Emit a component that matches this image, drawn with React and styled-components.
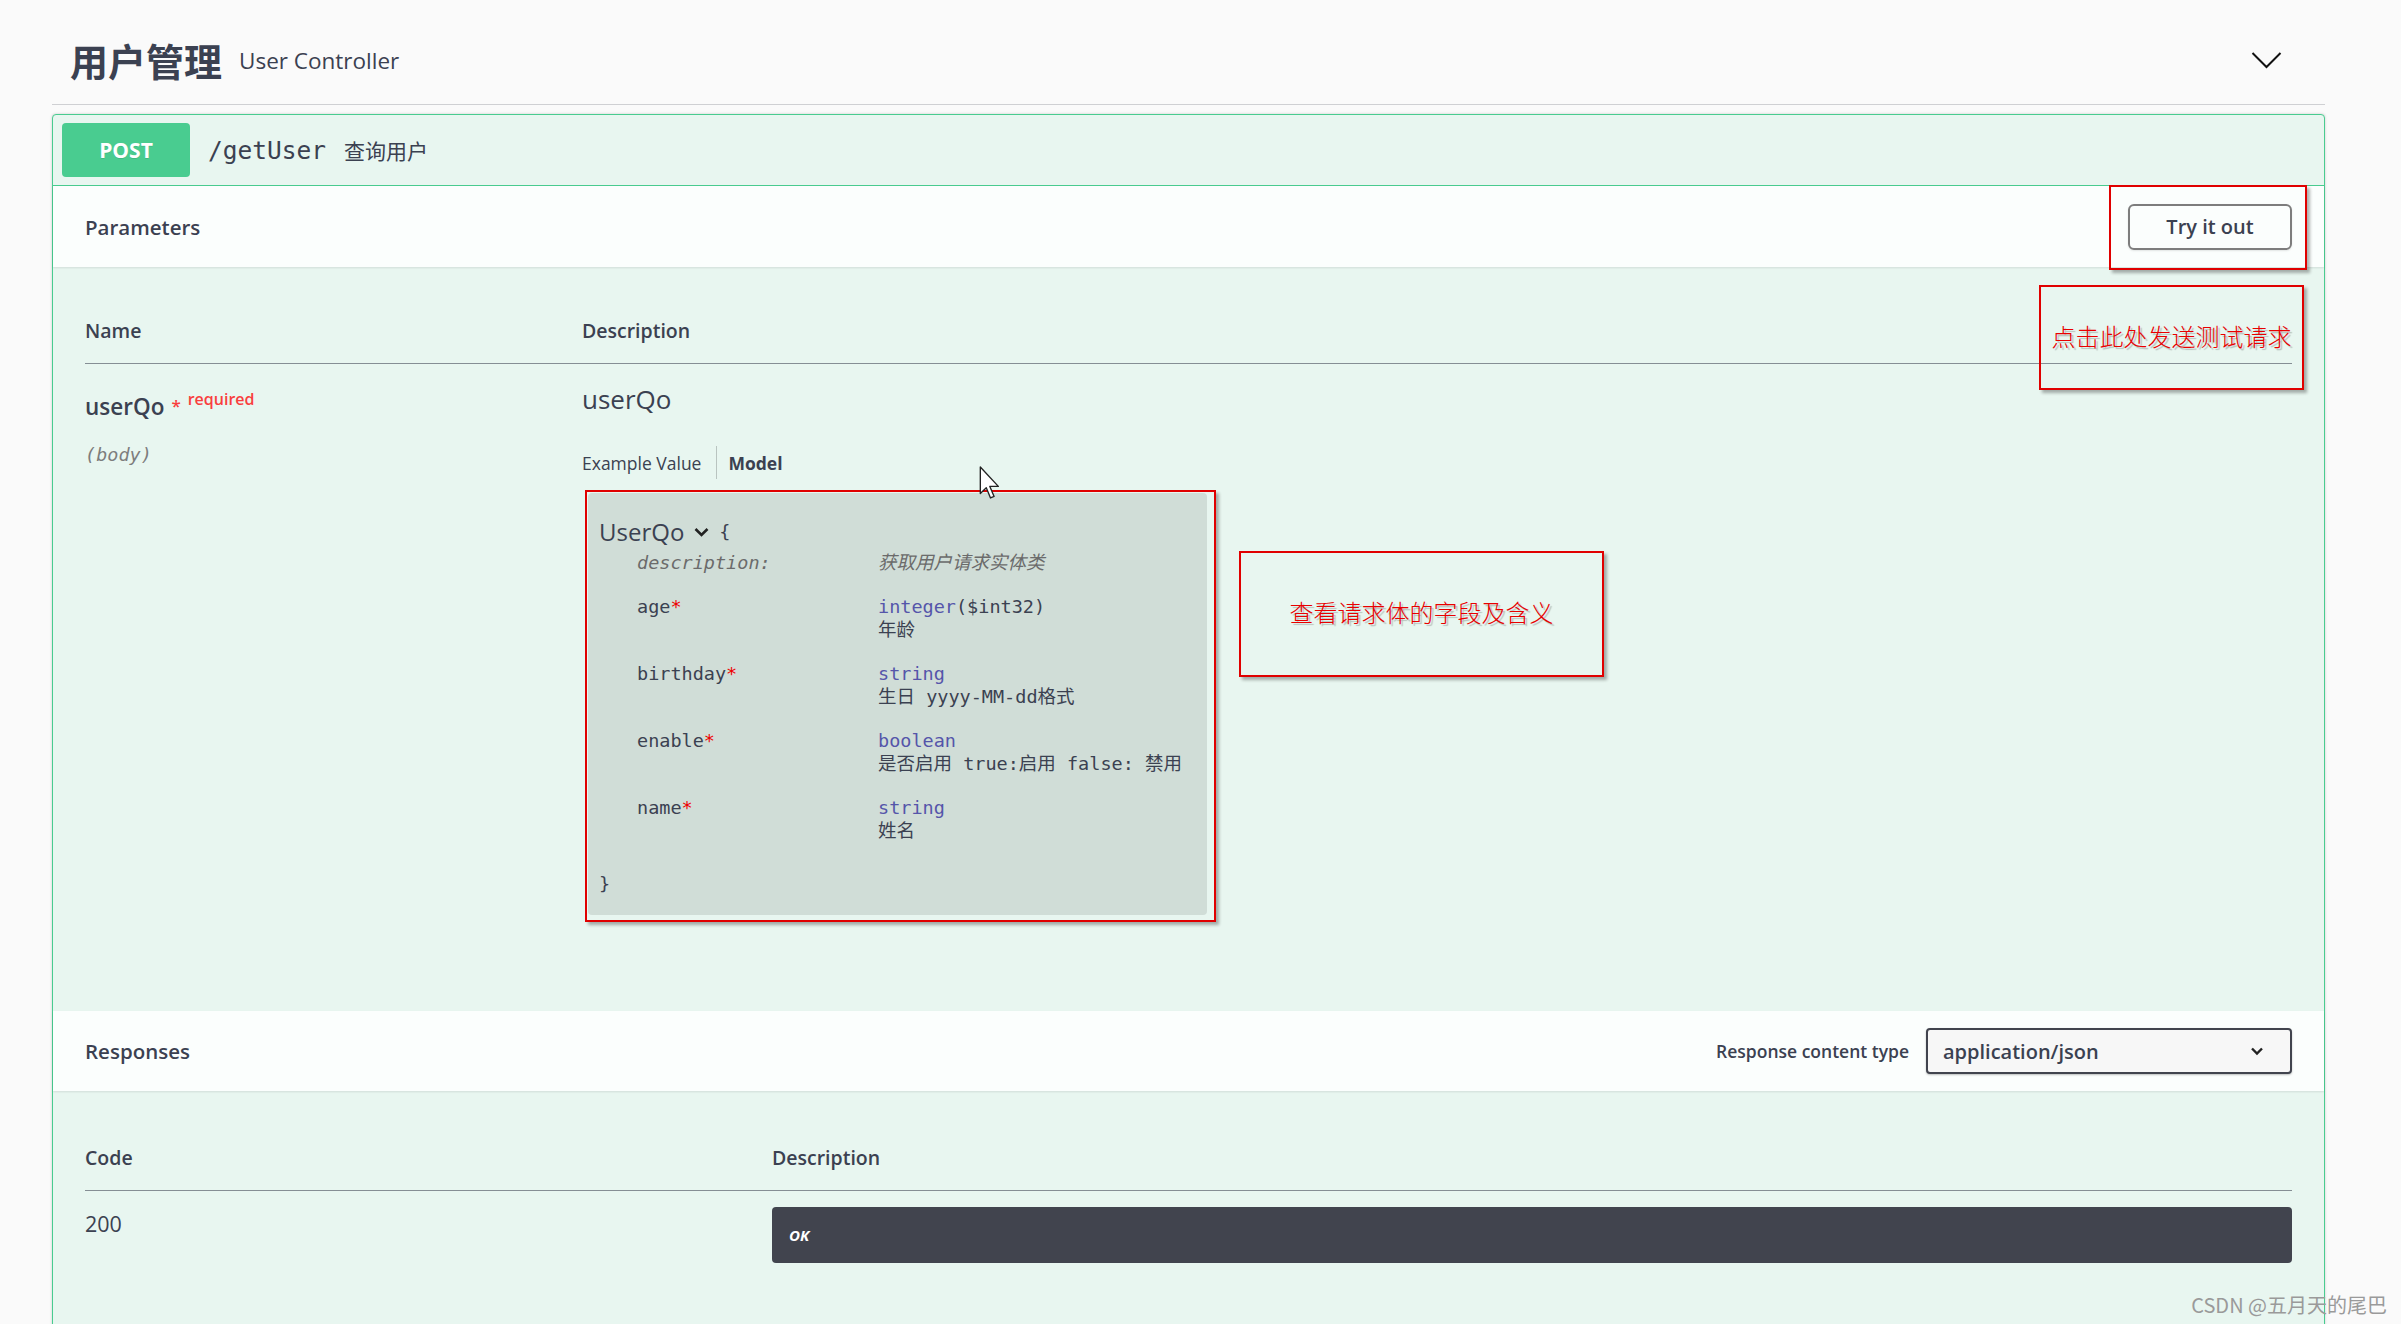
import React from 'react';
import styled, { createGlobalStyle } from 'styled-components';

const GlobalStyle = createGlobalStyle`
  html, body {
    margin: 0;
    padding: 0;
    background: #fafafa;
  }
  body {
    font-family: "Open Sans", "Noto Sans CJK SC", sans-serif;
    color: #3b4151;
  }
  * {
    box-sizing: border-box;
  }
`;

const MONO = '"DejaVu Sans Mono", "Noto Sans CJK SC", monospace';
const CJK = '"Noto Sans CJK SC", sans-serif';

const properties = [
  { key: 'age', type: 'integer', format: '($int32)', desc: '年龄' },
  { key: 'birthday', type: 'string', desc: '生日 yyyy-MM-dd格式' },
  { key: 'enable', type: 'boolean', desc: '是否启用 true:启用 false: 禁用' },
  { key: 'name', type: 'string', desc: '姓名' },
];

function App() {
  return (
    <Page>
      <GlobalStyle />
      <TagHeader>
        <TagTitle>用户管理</TagTitle>
        <TagSub>User Controller</TagSub>
        <Spacer />
        <svg width="31" height="18" viewBox="0 0 31 18">
          <polyline points="1.5,2 15.5,16 29.5,2" fill="none" stroke="#111" strokeWidth="2" />
        </svg>
      </TagHeader>

      <Opblock>
        <Summary>
          <Method>POST</Method>
          <Path>/getUser</Path>
          <PathDesc>查询用户</PathDesc>
        </Summary>

        <SectionHeader>
          <SectionTitle>Parameters</SectionTitle>
          <TryButton>Try it out</TryButton>
          <Mark $top={-1} $right={17} $width={198} $height={85} />
        </SectionHeader>

        <SectionBody $pt={51} $pb={89}>
          <Mark $top={18} $right={20} $width={265} $height={105}>
            <NoteText>点击此处发送测试请求</NoteText>
          </Mark>
          <Table>
            <thead>
              <tr>
                <Th $width={497}>Name</Th>
                <Th>Description</Th>
              </tr>
            </thead>
            <tbody>
              <tr>
                <Td>
                  <ParamName>
                    userQo
                    <Star>*</Star>
                    <Required>required</Required>
                  </ParamName>
                  <ParamIn>(body)</ParamIn>
                </Td>
                <Td>
                  <DescName>userQo</DescName>
                  <Tabs>
                    <Tab>Example Value</Tab>
                    <Tab $active>Model</Tab>
                  </Tabs>
                  <ModelRow>
                    <ModelFrame>
                      <ModelBox>
                        <ModelTitle>
                          UserQo
                          <svg width="17" height="12" viewBox="0 0 17 12">
                            <polyline points="2.5,3 8.5,9 14.5,3" fill="none" stroke="#222" strokeWidth="2.6" />
                          </svg>
                          <Brace>{'{'}</Brace>
                        </ModelTitle>
                        <Props>
                          <PropKey $muted>description:</PropKey>
                          <PropValue $muted>获取用户请求实体类</PropValue>
                          {properties.map((p) => (
                            <React.Fragment key={p.key}>
                              <PropKey>
                                {p.key}
                                <PropStar>*</PropStar>
                              </PropKey>
                              <PropValue>
                                <PropType>{p.type}</PropType>
                                {p.format}
                                <br />
                                {p.desc}
                              </PropValue>
                            </React.Fragment>
                          ))}
                        </Props>
                        <ClosingBrace>{'}'}</ClosingBrace>
                      </ModelBox>
                    </ModelFrame>
                    <NoteBox>
                      <NoteText>查看请求体的字段及含义</NoteText>
                    </NoteBox>
                  </ModelRow>
                </Td>
              </tr>
            </tbody>
          </Table>
        </SectionBody>

        <SectionHeader $height={80}>
          <SectionTitle>Responses</SectionTitle>
          <ContentType>
            <ContentLabel>Response content type</ContentLabel>
            <Select>
              application/json
              <svg width="14" height="10" viewBox="0 0 14 10">
                <polyline points="2,2.5 7,7.5 12,2.5" fill="none" stroke="#222" strokeWidth="2.4" />
              </svg>
            </Select>
          </ContentType>
        </SectionHeader>

        <SectionBody $pt={54} $pb={80}>
          <Table>
            <thead>
              <tr>
                <Th $width={687}>Code</Th>
                <Th>Description</Th>
              </tr>
            </thead>
            <tbody>
              <tr>
                <Td $pt={16}>
                  <Code>200</Code>
                </Td>
                <Td $pt={16}>
                  <OkBox>OK</OkBox>
                </Td>
              </tr>
            </tbody>
          </Table>
        </SectionBody>
      </Opblock>

      <Cursor width="21" height="34" viewBox="0 0 12 20">
        <path
          d="M0.6 0.6 L0.6 16.2 L4.1 12.8 L6.6 18.8 L8.7 17.9 L6.2 12 L11.2 12 Z"
          fill="#fff"
          stroke="#222"
          strokeWidth="0.8"
          strokeLinejoin="round"
        />
      </Cursor>
      <Watermark>CSDN @五月天的尾巴</Watermark>
    </Page>
  );
}

const Page = styled.div`
  position: relative;
  height: 1324px;
  overflow: hidden;
  padding: 0 76px 0 52px;
  background: #fafafa;
`;

const TagHeader = styled.div`
  display: flex;
  align-items: center;
  height: 105px;
  padding: 16px 43px 0 18px;
  border-bottom: 1px solid #cfd0d3;
`;

const TagTitle = styled.span`
  font-family: ${CJK};
  font-size: 38px;
  font-weight: 700;
  line-height: 1;
`;

const TagSub = styled.span`
  margin-left: 17px;
  font-size: 22.5px;
`;

const Spacer = styled.div`
  flex: 1;
`;

const Opblock = styled.div`
  margin-top: 9px;
  border: 1px solid #49cc90;
  border-radius: 4px;
  background: #e8f6f0;
  box-shadow: 0 0 3px rgba(0, 0, 0, 0.19);
`;

const Summary = styled.div`
  display: flex;
  align-items: center;
  padding: 8px 9px;
  border-bottom: 1px solid #49cc90;
`;

const Method = styled.div`
  display: flex;
  align-items: center;
  justify-content: center;
  width: 128px;
  height: 54px;
  border-radius: 4px;
  background: #49cc90;
  color: #fff;
  font-size: 21px;
  font-weight: 700;
  text-shadow: 0 1px 0 rgba(0, 0, 0, 0.1);
`;

const Path = styled.span`
  margin-left: 18px;
  font-family: ${MONO};
  font-size: 24.5px;
`;

const PathDesc = styled.span`
  margin-left: 18px;
  font-family: ${CJK};
  font-size: 21px;
`;

const SectionHeader = styled.div`
  position: relative;
  display: flex;
  align-items: center;
  justify-content: space-between;
  height: ${(p) => p.$height || 81}px;
  padding: 0 32px;
  background: rgba(255, 255, 255, 0.82);
  box-shadow: 0 1px 2px rgba(0, 0, 0, 0.1);
`;

const SectionTitle = styled.h4`
  margin: 0;
  font-size: 20.5px;
  font-weight: 600;
`;

const TryButton = styled.button`
  width: 164px;
  height: 46px;
  border: 2px solid #7d7d7d;
  border-radius: 6px;
  background: transparent;
  color: #3b4151;
  font-family: "Open Sans", sans-serif;
  font-size: 20px;
  font-weight: 600;
  box-shadow: 0 1px 2px rgba(0, 0, 0, 0.1);
`;

const Mark = styled.div`
  position: absolute;
  top: ${(p) => p.$top}px;
  right: ${(p) => p.$right}px;
  width: ${(p) => p.$width}px;
  height: ${(p) => p.$height}px;
  display: flex;
  align-items: center;
  justify-content: center;
  border: 2px solid #e00000;
  box-shadow: 3px 3px 3px rgba(0, 0, 0, 0.3);
  z-index: 2;
`;

const NoteText = styled.span`
  margin-bottom: 5px;
  font-family: ${CJK};
  font-size: 24px;
  font-weight: 300;
  color: #e80000;
  text-shadow: 2px 2px 1px rgba(0, 0, 0, 0.22);
  white-space: nowrap;
`;

const SectionBody = styled.div`
  position: relative;
  padding: ${(p) => p.$pt}px 32px ${(p) => p.$pb}px;
`;

const Table = styled.table`
  width: 100%;
  border-collapse: collapse;
`;

const Th = styled.th`
  width: ${(p) => (p.$width ? `${p.$width}px` : 'auto')};
  padding: 0 0 19px;
  border-bottom: 1px solid rgba(59, 65, 81, 0.35);
  text-align: left;
  font-size: 19.5px;
  font-weight: 600;
  line-height: 26px;
`;

const Td = styled.td`
  padding: ${(p) => p.$pt || 18}px 0 0;
  vertical-align: top;
`;

const ParamName = styled.div`
  font-size: 22.5px;
  font-weight: 600;
  line-height: 34px;
`;

const Star = styled.span`
  margin-left: 7px;
  color: #f93e3e;
  font-size: 17px;
  vertical-align: 3px;
`;

const Required = styled.span`
  margin-left: 7px;
  color: #f93e3e;
  font-size: 16px;
  vertical-align: 10px;
`;

const ParamIn = styled.div`
  margin-top: 18px;
  font-family: ${MONO};
  font-size: 18.5px;
  font-style: italic;
  line-height: 26px;
  color: #7d7d7d;
`;

const DescName = styled.div`
  font-size: 26px;
  line-height: 34px;
`;

const Tabs = styled.div`
  display: flex;
  align-items: center;
  height: 33px;
  margin-top: 30px;
`;

const Tab = styled.div`
  display: flex;
  align-items: center;
  height: 100%;
  padding: ${(p) => (p.$active ? '0 0 0 11px' : '0 15px 0 0')};
  border-left: ${(p) => (p.$active ? '1px solid rgba(0, 0, 0, 0.2)' : 'none')};
  font-size: 17.5px;
  font-weight: ${(p) => (p.$active ? 700 : 400)};
`;

const ModelRow = styled.div`
  display: flex;
  align-items: flex-start;
  gap: 23px;
  margin: 11px 0 0 3px;
`;

const ModelFrame = styled.div`
  width: 631px;
  padding: 1px 7px 5px 1px;
  border: 2px solid #e00000;
  box-shadow: 3px 3px 3px rgba(0, 0, 0, 0.3);
`;

const ModelBox = styled.div`
  padding: 23px 12px 20px 11px;
  border-radius: 4px;
  background: rgba(0, 0, 0, 0.1);
  font-family: ${MONO};
  font-size: 18.5px;
  line-height: 23px;
`;

const ModelTitle = styled.div`
  display: flex;
  align-items: center;
  gap: 9px;
  font-family: "Open Sans", sans-serif;
  font-size: 24px;
  line-height: 32px;
`;

const Brace = styled.span`
  font-family: ${MONO};
  font-size: 18.5px;
`;

const Props = styled.div`
  display: grid;
  grid-template-columns: 241px auto;
  row-gap: 21px;
  margin: 3px 0 0 38px;
`;

const PropKey = styled.div`
  color: ${(p) => (p.$muted ? '#6b6b6b' : '#3b4151')};
  font-style: ${(p) => (p.$muted ? 'italic' : 'normal')};
`;

const PropValue = styled.div`
  color: ${(p) => (p.$muted ? '#6b6b6b' : '#3b4151')};
  font-style: ${(p) => (p.$muted ? 'italic' : 'normal')};
  white-space: nowrap;
`;

const PropStar = styled.span`
  color: #e00;
`;

const PropType = styled.span`
  color: #55a;
`;

const ClosingBrace = styled.div`
  margin-top: 30px;
`;

const NoteBox = styled.div`
  display: flex;
  align-items: center;
  justify-content: center;
  width: 365px;
  height: 126px;
  margin-top: 61px;
  border: 2px solid #e00000;
  box-shadow: 3px 3px 3px rgba(0, 0, 0, 0.3);
`;

const ContentType = styled.div`
  display: flex;
  align-items: center;
  gap: 17px;
`;

const ContentLabel = styled.span`
  font-size: 17.5px;
  font-weight: 600;
`;

const Select = styled.div`
  display: flex;
  align-items: center;
  justify-content: space-between;
  width: 366px;
  height: 46px;
  padding: 0 26px 0 15px;
  border: 2px solid #41444e;
  border-radius: 4px;
  background: #f7f7f7;
  box-shadow: 0 1px 2px rgba(0, 0, 0, 0.25);
  font-size: 20px;
  font-weight: 600;
`;

const Code = styled.div`
  padding-top: 2px;
  font-size: 21.5px;
  line-height: 30px;
`;

const OkBox = styled.div`
  display: flex;
  align-items: center;
  height: 56px;
  padding: 0 17px;
  border-radius: 4px;
  background: #41444e;
  color: #fff;
  font-size: 15px;
  font-weight: 700;
  font-style: italic;
`;

const Cursor = styled.svg`
  position: absolute;
  left: 979px;
  top: 466px;
`;

const Watermark = styled.div`
  position: absolute;
  right: 14px;
  bottom: 5px;
  font-family: ${CJK};
  font-size: 20px;
  color: #9a9a9a;
`;

export default App;
